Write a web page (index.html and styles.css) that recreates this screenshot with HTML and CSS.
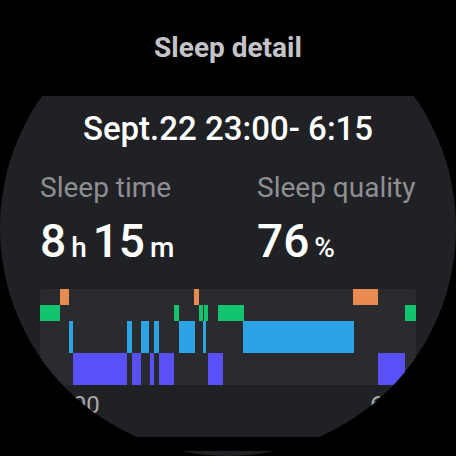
FILE: index.html
```html
<!DOCTYPE html>
<html lang="en">
<head>
    <meta charset="UTF-8">
    <meta name="viewport" content="width=device-width, initial-scale=1.0">
    <link rel="stylesheet" href="styles.css">
    <title>Sleep detail</title>
</head>
<body>

<div class="watch">
    <div class="title">Sleep detail</div>

    <div class="card">
        <div class="date">Sept.22 23:00- 6:15</div>

        <div class="stats">
            <div class="stat">
                <div class="label">Sleep time</div>
                <div class="value">8<span class="unit">h</span>15<span class="unit">m</span></div>
            </div>
            <div class="stat">
                <div class="label">Sleep quality</div>
                <div class="value">76<span class="unit">%</span></div>
            </div>
        </div>

        <div id="chart" class="chart">
            <div class="row row-awake" data-stage="awake"></div>
            <div class="row row-rem" data-stage="rem"></div>
            <div class="row row-light" data-stage="light"></div>
            <div class="row row-deep" data-stage="deep"></div>
        </div>

        <div class="axis">
            <span>23:00</span>
            <span>6:15</span>
        </div>
    </div>

    <div class="card next"></div>
</div>

<script>
    // segments in px along a 376px wide timeline
    const total = 376;
    const stages = {
        awake: [[20, 29], [154, 159], [313, 338]],
        rem: [[0, 20], [134, 139], [159, 163], [164, 168], [178, 204], [365, 376]],
        light: [[29, 33], [87, 92], [101, 109], [114, 119], [139, 155], [163, 166], [203, 314]],
        deep: [[33, 87], [92, 101], [110, 114], [119, 134], [168, 183], [338, 365]]
    };

    document.querySelectorAll('#chart .row').forEach(function (row) {
        stages[row.dataset.stage].forEach(function (seg) {
            const bar = document.createElement('div');
            bar.className = 'bar';
            bar.style.left = (seg[0] / total * 100) + '%';
            bar.style.width = ((seg[1] - seg[0]) / total * 100) + '%';
            row.appendChild(bar);
        });
    });
</script>

</body>
</html>
```

FILE: styles.css
```css
body {
    margin: 0;
    background-color: #000;
    font-family: Roboto, "Liberation Sans", sans-serif;
}

.watch {
    width: 456px;
    height: 456px;
    border-radius: 50%;
    overflow: hidden;
    background-color: #000;
}

.title {
    padding: 30px 0;
    font-size: 28px;
    line-height: 36px;
    font-weight: 700;
    color: #c4c4c8;
    text-align: center;
}

.card {
    padding: 13px 40px 18px;
    background-color: #202124;
}

.date {
    font-size: 33px;
    line-height: 40px;
    font-weight: 500;
    color: #fff;
    text-align: center;
}

.stats {
    display: grid;
    grid-template-columns: 217px 1fr;
    margin-top: 23px;
}

.label {
    font-size: 28px;
    line-height: 32px;
    color: #8f8f93;
}

.value {
    margin-top: 11px;
    font-size: 46px;
    line-height: 52px;
    font-weight: 500;
    color: #fff;
}

.unit {
    margin: 0 6px 0 5px;
    font-size: 28px;
    line-height: 1;
    font-weight: 500;
}

.chart {
    margin-top: 22px;
    background-color: #2a2b2e;
    border-radius: 4px;
}

.row {
    position: relative;
    height: 16px;
}

.row-light,
.row-deep {
    height: 32px;
}

.bar {
    position: absolute;
    top: 0;
    bottom: 0;
}

.row-awake .bar { background-color: #e98b50; }
.row-rem .bar { background-color: #12c46e; }
.row-light .bar { background-color: #2ca3e4; }
.row-deep .bar { background-color: #5a50f8; }

.axis {
    display: flex;
    justify-content: space-between;
    margin-top: 6px;
    font-size: 24px;
    line-height: 28px;
    color: #a9a9ad;
}

.card.next {
    height: 60px;
    margin-top: 14px;
    padding: 0;
}
```
